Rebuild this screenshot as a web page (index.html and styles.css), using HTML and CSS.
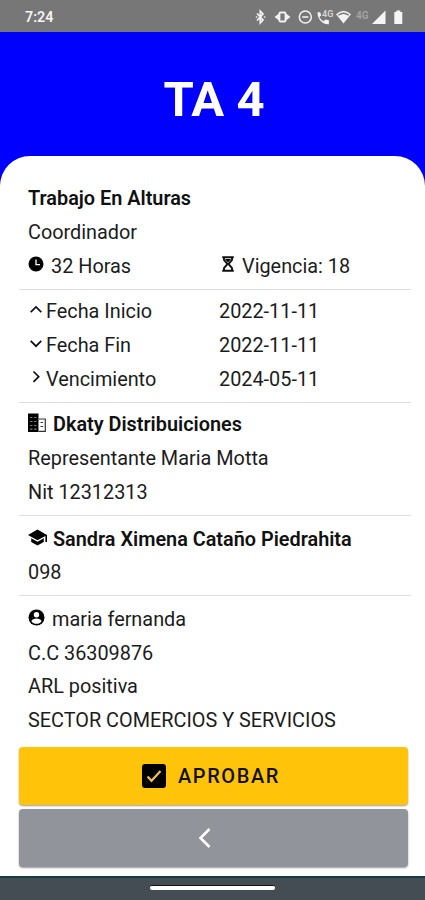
FILE: index.html
```html
<!DOCTYPE html>
<html lang="es">
<head>
    <meta charset="UTF-8">
    <meta name="viewport" content="width=device-width, initial-scale=1.0">
    <title>TA 4</title>
    <link rel="stylesheet" href="styles.css">
</head>
<body>
    <div class="status-bar">
        <span class="time">7:24</span>
        <svg class="status-icons" viewBox="0 0 160 20" width="160" height="20">
            <!-- bluetooth -->
            <path d="M6.500 7l5.500 6-2.700 2.800V4.200L12 7l-5.500 6M5.500 10h.1M13.500 10h.1" fill="none" stroke="#f2f2f2" stroke-width="1.700" stroke-linecap="round"/>
            <!-- vibrate -->
            <path d="M28 6.500L23.500 10l4.500 3.500zM35 6.500l4.500 3.500-4.500 3.500z" fill="#f2f2f2"/>
            <rect x="28.500" y="5.500" width="6" height="9" rx="1" fill="none" stroke="#f2f2f2" stroke-width="1.800"/>
            <!-- do not disturb -->
            <circle cx="54.300" cy="10" r="6" fill="none" stroke="#f2f2f2" stroke-width="1.500"/>
            <path d="M51.300 10h6" stroke="#f2f2f2" stroke-width="1.600"/>
            <!-- 4G call -->
            <path d="M66.500 5.200h2.800l.8 3.400-1.700 1.500c1 2 2.400 3.300 4.300 4.200l1.600-1.800 3.600.8v3.900c-6.800.6-11.600-5.500-11.400-12z" fill="#f2f2f2"/>
            <text x="71" y="9.800" class="call-label">4G</text>
            <!-- wifi -->
            <path d="M85 7.300Q92.500 .3 100 7.300L92.500 16.600z" fill="#f2f2f2"/>
            <path d="M87.300 8.300Q92.500 4.200 97.700 8.300" fill="none" stroke="#777" stroke-width="1.300"/>
            <text x="105" y="11.500" class="net-label">4G</text>
            <!-- signal -->
            <path d="M121 17L134.500 3.500V17z" fill="#f5f5f5"/>
            <path d="M143.300 5h2V3.500h4V5h2v12h-8z" fill="#f5f5f5"/>
        </svg>
    </div>

    <header>
        <h1>TA 4</h1>
    </header>

    <main class="card">
        <section>
            <p class="title">Trabajo En Alturas</p>
            <p>Coordinador</p>
            <div class="row">
                <p>
                    <svg class="icon time-icon" viewBox="0 0 16 16" width="16" height="16"><circle cx="8" cy="8" r="7.500"/><path d="M8 3.500v5.200h4" fill="none" stroke="#fff" stroke-width="1.300"/></svg>
                    <span>32 Horas</span>
                </p>
                <p>
                    <svg class="icon glass-icon" viewBox="0 0 14 16" width="14" height="16"><path d="M1.200 1.200h11.600M1.200 14.800h11.600M3 1.500v2.500l3.500 4L3 12v2.500M11 1.500v2.500L7.500 8l3.500 4v2.500" fill="none" stroke="#111" stroke-width="1.900"/><path d="M4 3h6L7 6.500z"/></svg>
                    <span>Vigencia: 18</span>
                </p>
            </div>
        </section>
        <section>
            <div class="row">
                <p><svg class="icon arrow" viewBox="0 0 16 16" width="16" height="16"><path d="M2.700 10.200L8 4.900l5.300 5.300"/></svg><span>Fecha Inicio</span></p>
                <p>2022-11-11</p>
            </div>
            <div class="row">
                <p><svg class="icon arrow" viewBox="0 0 16 16" width="16" height="16"><path d="M2.700 4.900L8 10.200l5.300-5.300"/></svg><span>Fecha Fin</span></p>
                <p>2022-11-11</p>
            </div>
            <div class="row">
                <p><svg class="icon arrow" viewBox="0 0 16 16" width="16" height="16"><path d="M5.500 2.500L10.700 7.700 5.500 12.900"/></svg><span>Vencimiento</span></p>
                <p>2024-05-11</p>
            </div>
        </section>
        <section>
            <p class="title">
                <svg class="icon company" viewBox="0 0 19 20" width="19" height="20"><path d="M0 .5h10.500v18.500H0z"/><path d="M10.500 6h6.800v12.300h-6.800M12.500 9.500h2.500M12.500 13.500h2.500" fill="none" stroke="#333" stroke-width="1.200"/><path d="M2 4.500h2.500M6 4.500h2.500M2 8.500h2.500M6 8.500h2.500M2 12.500h2.500M6 12.500h2.500M2 16.200h2.500M6 16.200h2.500" stroke="#777" stroke-width="1.200"/></svg>
                <span>Dkaty Distribuiciones</span>
            </p>
            <p>Representante Maria Motta</p>
            <p>Nit 12312313</p>
        </section>
        <section>
            <p class="title">
                <svg class="icon school" viewBox="0 0 19 17" width="19" height="17"><path d="M9.500.5L0 6l9.500 5.300L17.400 7v6H19V6z"/><path d="M3.200 9.300v3.600l6.300 3.500 6.300-3.500V9.300l-6.300 3.500z"/></svg>
                <span>Sandra Ximena Cataño Piedrahita</span>
            </p>
            <p>098</p>
        </section>
        <section>
            <p>
                <svg class="icon person" viewBox="0 0 17 17" width="17" height="17"><circle cx="8.500" cy="8.500" r="8"/><circle cx="8.500" cy="5.700" r="2.700" fill="#fff"/><path d="M3.400 12.200c1-3.500 9.200-3.500 10.200 0-2.400 3.500-7.800 3.500-10.200 0z" fill="#fff"/></svg>
                <span>maria fernanda</span>
            </p>
            <p>C.C 36309876</p>
            <p>ARL positiva</p>
            <p>SECTOR COMERCIOS Y SERVICIOS</p>
        </section>
        <div class="actions">
            <button class="approve">
                <svg viewBox="0 0 24 24" width="24" height="24"><rect width="24" height="24" rx="3"/><path d="M5.500 12.500l4 4.300L18.500 7" fill="none" stroke="#efbd55" stroke-width="2.200"/></svg>
                <span>APROBAR</span>
            </button>
            <button class="back">
                <svg viewBox="0 0 14 22" width="14" height="22"><path d="M11.500 2L2.500 11l9 9" fill="none" stroke="#fff" stroke-width="2.600"/></svg>
            </button>
        </div>
    </main>

    <div class="nav-bar"><div class="handle"></div></div>
</body>
</html>
```
FILE: styles.css
```css
* {
    box-sizing: border-box;
}
body {
    margin: 0;
    height: 900px;
    display: flex;
    flex-direction: column;
    overflow: hidden;
    background: #00f;
    color: #1c1c1c;
    font-family: Roboto, sans-serif;
}
.status-bar {
    height: 32px;
    flex: none;
    background: #777;
    display: flex;
    align-items: center;
    justify-content: space-between;
    padding: 1px 14px 0 25px;
}
.status-icons {
    display: block;
}
.time {
    color: #f5f5f5;
    font-size: 14.3px;
    font-weight: 600;
    padding-top: 1px;
}
.call-label,
.net-label {
    font-size: 9px;
    font-weight: 600;
    fill: #d5d5d5;
}
.net-label {
    font-size: 10px;
    fill: #a5a5a5;
}
header {
    height: 124px;
    flex: none;
    display: flex;
    align-items: center;
    justify-content: center;
    padding: 12px 0 0 3px;
}
h1 {
    margin: 0;
    color: #fff;
    font-size: 49px;
    line-height: 58px;
    font-weight: 700;
}
.card {
    flex: 1;
    min-height: 0;
    background: #fff;
    border-radius: 30px 30px 0 0;
    padding: 21px 14px 0 19px;
}
section {
    padding: 5px 0 6px 9px;
    border-bottom: 1px solid #dedede;
}
section:nth-of-type(4) {
    padding: 6px 0 5px 9px;
}
section:nth-of-type(5) {
    border: none;
    padding: 7px 0 0 9px;
}
p {
    margin: 0;
    height: 33.7px;
    display: flex;
    align-items: center;
    font-size: 19.85px;
    white-space: nowrap;
}
.title {
    color: #111;
    font-weight: 600;
}
.row {
    display: grid;
    grid-template-columns: 191px 1fr;
}
.icon {
    flex: none;
    margin: -4px 7px 0 0;
}
.arrow {
    margin-right: 2px;
    fill: none;
    stroke: #111;
    stroke-width: 1.7;
}
.glass-icon {
    margin-left: 2px;
}
.company,
.school {
    margin-right: 6px;
}
.actions {
    display: flex;
    flex-direction: column;
    gap: 4px;
    margin-top: 10px;
    padding-right: 3px;
}
button {
    height: 58px;
    border: none;
    border-radius: 4px;
    display: flex;
    align-items: center;
    justify-content: center;
    gap: 12px;
    font-family: inherit;
    font-size: 20px;
    box-shadow: 0 1px 2px rgba(0, 0, 0, 0.4);
}
.approve {
    background: #ffc409;
    color: #111;
    font-weight: 500;
    letter-spacing: 1.6px;
    padding-right: 11px;
}
.back {
    background: #92949c;
}
.back svg {
    margin-right: 17px;
}
.nav-bar {
    height: 24px;
    flex: none;
    background: #444c54;
    border-top: 2px solid #173c3f;
    display: flex;
    justify-content: center;
    padding-top: 7px;
}
.handle {
    width: 125px;
    height: 5px;
    border-radius: 2px;
    background: #fff;
    border-top: 1px solid #111;
}
```
